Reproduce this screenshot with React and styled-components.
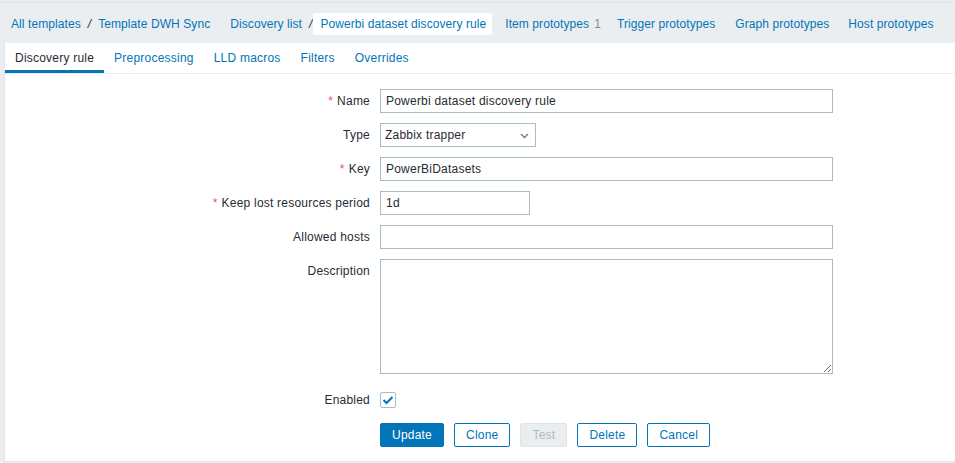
import React from "react";
import styled, { createGlobalStyle } from "styled-components";

const Global = createGlobalStyle`
  html, body { margin: 0; padding: 0; background: #ebeef0; }
  body { font-family: "Liberation Sans", Arial, sans-serif; font-size: 12px; letter-spacing: 0.22px; color: #1f2c33; overflow: hidden; }
  * { box-sizing: border-box; }
`;

const Page = styled.div`
  width: 955px;
  height: 463px;
  padding-top: 2px;
  background: #ebeef0;
`;

const Nav = styled.nav`
  display: flex;
  align-items: center;
  height: 41px;
  border-top: 1px solid #dfe4e7;
  padding: 2px 0 0 11px;
  letter-spacing: 0.08px;
`;

const Group = styled.div`
  display: flex;
  align-items: center;
  margin-left: ${(p) => p.$gap || 0}px;
`;

const Link = styled.a`
  color: #0275b8;
  text-decoration: none;
  white-space: nowrap;
`;

const Sep = styled.span`
  color: #1f2c33;
  margin: 0 ${(p) => p.$right ?? 7}px 0 7px;
  font-style: italic;
`;

const Current = styled.span`
  display: inline-flex;
  align-items: center;
  height: 22px;
  padding: 0 6px 0 7px;
  background: #fff;
  border-radius: 2px;
  color: #0275b8;
  white-space: nowrap;
`;

const Count = styled.span`
  color: #768d99;
  margin-left: 5px;
`;

const Container = styled.div`
  margin-left: 4px;
  background: #fff;
  border-left: 1px solid #dfe4e7;
  border-bottom: 1px solid #dfe4e7;
  height: 419px;
`;

const Tabs = styled.ul`
  display: flex;
  list-style: none;
  margin: 0;
  padding: 0;
  height: 31px;
  border-bottom: 1px solid #ebeef0;
`;

const Tab = styled.li`
  height: 30px;
  display: flex;
  align-items: center;
  padding: 3px 10px 0;
  border-bottom: 3px solid ${(p) => (p.$active ? "#0275b8" : "transparent")};
  color: ${(p) => (p.$active ? "#1f2c33" : "#0275b8")};
  white-space: nowrap;
`;

const Form = styled.div`
  display: grid;
  grid-template-columns: 365px 1fr;
  column-gap: 10px;
  row-gap: 10px;
  padding-top: 15px;
  align-items: start;
`;

const Label = styled.label`
  text-align: right;
  line-height: 24px;
  white-space: nowrap;
  margin-top: ${(p) => p.$offset || 0}px;
`;

const Req = styled.span`
  color: #e45959;
  margin-right: 4px;
`;

const Field = styled.div`
  display: flex;
  align-items: center;
  min-height: 24px;
  margin-top: ${(p) => p.$offset || 0}px;
`;

const Input = styled.input`
  width: ${(p) => p.$w}px;
  height: 24px;
  border: 1px solid #acbbc2;
  padding: 0 5px;
  font-family: inherit;
  font-size: 12px;
  letter-spacing: inherit;
  color: #1f2c33;
  background: #fff;
  outline: none;
`;

const SelectBox = styled.div`
  position: relative;
  width: 156px;
  height: 24px;
  border: 1px solid #acbbc2;
  display: flex;
  align-items: center;
  padding-left: 4px;
  color: #1f2c33;
`;

const Chevron = styled.svg`
  position: absolute;
  right: 6px;
  top: 9px;
`;

const TextArea = styled.textarea`
  width: 453px;
  height: 115px;
  border: 1px solid #acbbc2;
  padding: 4px 5px;
  font-family: inherit;
  font-size: 12px;
  resize: both;
  outline: none;
  display: block;
`;

const CheckBox = styled.span`
  width: 16px;
  height: 16px;
  border: 1px solid #acbbc2;
  border-radius: 2px;
  display: inline-flex;
  align-items: center;
  justify-content: center;
  background: #fff;
`;

const Buttons = styled.div`
  display: flex;
  gap: 10px;
  margin-top: 1px;
`;

const Button = styled.button`
  height: 24px;
  padding: 0 11px;
  border-radius: 2px;
  font-family: inherit;
  font-size: 12px;
  letter-spacing: inherit;
  border: 1px solid ${(p) => (p.$disabled ? "#dfe4e7" : "#0275b8")};
  background: ${(p) => (p.$primary ? "#0275b8" : p.$disabled ? "#ebeef0" : "#fff")};
  color: ${(p) => (p.$primary ? "#fff" : p.$disabled ? "#acbbc2" : "#0275b8")};
  cursor: pointer;
`;

function Row({ label, required, children, labelOffset, fieldOffset }) {
  return (
    <>
      <Label $offset={labelOffset}>
        {required && <Req>*</Req>}
        {label}
      </Label>
      <Field $offset={fieldOffset}>{children}</Field>
    </>
  );
}

export default function App() {
  return (
    <Page>
      <Global />
      <Nav>
        <Group>
          <Link>All templates</Link>
          <Sep>/</Sep>
          <Link>Template DWH Sync</Link>
        </Group>
        <Group $gap={20}>
          <Link>Discovery list</Link>
          <Sep $right={1}>/</Sep>
          <Current>Powerbi dataset discovery rule</Current>
        </Group>
        <Group $gap={13}>
          <Link>Item prototypes</Link>
          <Count>1</Count>
        </Group>
        <Group $gap={16}>
          <Link>Trigger prototypes</Link>
        </Group>
        <Group $gap={20}>
          <Link>Graph prototypes</Link>
        </Group>
        <Group $gap={19}>
          <Link>Host prototypes</Link>
        </Group>
      </Nav>
      <Container>
        <Tabs>
          <Tab $active>Discovery rule</Tab>
          <Tab>Preprocessing</Tab>
          <Tab>LLD macros</Tab>
          <Tab>Filters</Tab>
          <Tab>Overrides</Tab>
        </Tabs>
        <Form>
          <Row label="Name" required>
            <Input $w={453} defaultValue="Powerbi dataset discovery rule" />
          </Row>
          <Row label="Type">
            <SelectBox>
              Zabbix trapper
              <Chevron width="9" height="6" viewBox="0 0 9 6">
                <path d="M1 1l3.5 3.5L8 1" fill="none" stroke="#6b7c85" strokeWidth="1.3" />
              </Chevron>
            </SelectBox>
          </Row>
          <Row label="Key" required>
            <Input $w={453} defaultValue="PowerBiDatasets" />
          </Row>
          <Row label="Keep lost resources period" required>
            <Input $w={150} defaultValue="1d" />
          </Row>
          <Row label="Allowed hosts">
            <Input $w={453} defaultValue="" />
          </Row>
          <Row label="Description">
            <TextArea defaultValue="" />
          </Row>
          <Row label="Enabled" labelOffset={4} fieldOffset={4}>
            <CheckBox>
              <svg width="12" height="10" viewBox="0 0 12 10">
                <path d="M1.5 5l3 3L10.5 2" fill="none" stroke="#0275b8" strokeWidth="2" />
              </svg>
            </CheckBox>
          </Row>
          <div />
          <Buttons>
            <Button $primary>Update</Button>
            <Button>Clone</Button>
            <Button $disabled>Test</Button>
            <Button>Delete</Button>
            <Button>Cancel</Button>
          </Buttons>
        </Form>
      </Container>
    </Page>
  );
}
